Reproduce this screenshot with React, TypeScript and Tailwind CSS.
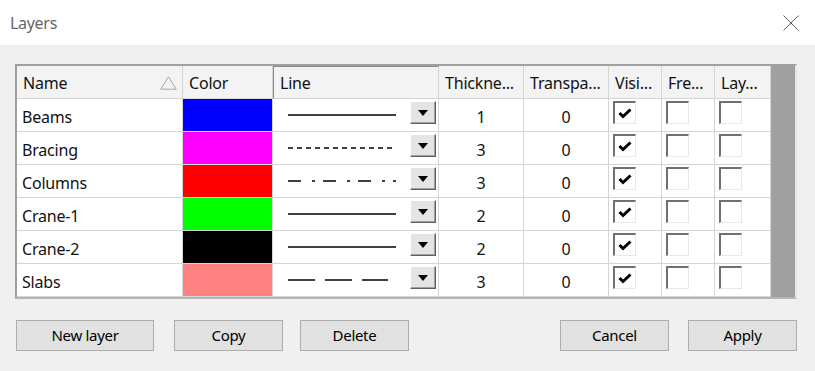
import React from 'react';

type Layer = {
  name: string;
  color: string;
  dash: string;
  thickness: number;
  transparency: number;
  visible: boolean;
};

const LAYERS: Layer[] = [
  { name: 'Beams', color: 'bg-[#0000ff]', dash: '', thickness: 1, transparency: 0, visible: true },
  { name: 'Bracing', color: 'bg-[#ff00ff]', dash: '5 4', thickness: 3, transparency: 0, visible: true },
  { name: 'Columns', color: 'bg-[#ff0000]', dash: '13 11 3 8', thickness: 3, transparency: 0, visible: true },
  { name: 'Crane-1', color: 'bg-[#00ff00]', dash: '', thickness: 2, transparency: 0, visible: true },
  { name: 'Crane-2', color: 'bg-[#000000]', dash: '', thickness: 2, transparency: 0, visible: true },
  { name: 'Slabs', color: 'bg-[#ff8080]', dash: '27 10', thickness: 3, transparency: 0, visible: true },
];

const COLS = 'grid grid-cols-[166px_90px_166px_85px_85px_53px_53px_56px]';

const Checkbox: React.FC<{ checked: boolean }> = ({ checked }) => (
  <div className="ml-[4px] mt-[2px] flex h-[23px] w-[23px] items-center justify-center self-start border-l-2 border-t-2 border-r border-b border-l-[#707070] border-t-[#707070] border-r-[#e8e8e8] border-b-[#e8e8e8] bg-white">
    {checked && (
      <svg width="14" height="12" viewBox="0 0 14 12">
        <path d="M1.5 6 L5 9.5 L12.5 2.5" fill="none" stroke="#000" strokeWidth="3" />
      </svg>
    )}
  </div>
);

const DropButton: React.FC = () => (
  <div className="mr-[2px] mt-[2px] flex h-[23px] w-[26px] items-center justify-center self-start border border-t-white border-l-white border-r-[#606060] border-b-[#606060] bg-[#e4e4e4] shadow-[inset_-1px_-1px_0_#a0a0a0]">
    <svg width="10" height="6" viewBox="0 0 10 6">
      <path d="M0 0 H10 L5 6 Z" fill="#000" />
    </svg>
  </div>
);

const HeadCell: React.FC<{ children?: React.ReactNode; className?: string }> = ({ children, className = '' }) => (
  <div className={`flex h-[33px] items-center border-b border-r border-[#d5d5d5] bg-[#f3f3f3] pl-[6px] pt-[1px] ${className}`}>
    {children}
  </div>
);

const Cell: React.FC<{ children?: React.ReactNode; className?: string }> = ({ children, className = '' }) => (
  <div className={`flex h-[33px] items-center border-b border-r border-[#d5d5d5] ${className}`}>{children}</div>
);

const Btn: React.FC<{ label: string; className?: string }> = ({ label, className = '' }) => (
  <button className={`h-[31px] w-[109px] border border-[#adadad] bg-[#e1e1e1] text-[15px] tracking-[-0.3px] text-black ${className}`}>
    {label}
  </button>
);

export default function App() {
  return (
    <div className="flex h-[371px] w-[815px] flex-col bg-[#f0f0f0] font-['Noto_Sans',sans-serif] text-black">
      <div className="flex h-[45px] items-center justify-between bg-white pl-[10px] pr-[16px]">
        <span className="text-[16px] tracking-[-0.3px] text-[#666666]">Layers</span>
        <svg width="16" height="16" viewBox="0 0 16 16">
          <path d="M0.5 0.5 L15.5 15.5 M15.5 0.5 L0.5 15.5" stroke="#606060" strokeWidth="1" />
        </svg>
      </div>

      <div className="ml-[15px] mt-[19px] flex w-[782px] border-l-2 border-t-2 border-b-2 border-r-2 border-l-[#a0a0a0] border-t-[#a0a0a0] border-b-[#b5b5b5] border-r-[#e6e6e6] bg-white text-[16px] tracking-[-0.2px] text-[#111]">
        <div className="flex flex-col">
          <div className={COLS}>
            <HeadCell className="justify-between pr-[5px]">
              <span>Name</span>
              <svg width="17" height="14" viewBox="0 0 17 14">
                <path d="M8.5 0.8 L16.2 13.2 H0.8 Z" fill="none" stroke="#a8a8a8" strokeWidth="1" />
              </svg>
            </HeadCell>
            <HeadCell>Color</HeadCell>
            <HeadCell className="border-l border-t border-l-[#8a8a8a] border-t-[#8a8a8a] pl-[5px]">Line</HeadCell>
            <HeadCell className="pl-[3px]">Thickne...</HeadCell>
            <HeadCell className="pl-[3px]">Transpa...</HeadCell>
            <HeadCell className="pl-[4px]">Visi...</HeadCell>
            <HeadCell className="pl-[5px]">Fre...</HeadCell>
            <HeadCell className="pl-[5px]">Lay...</HeadCell>
          </div>
          {LAYERS.map((l) => (
            <div key={l.name} className={COLS}>
              <Cell className="pl-[5px] pt-[3px]">{l.name}</Cell>
              <Cell className={l.color} />
              <Cell className="justify-between pl-[15px]">
                <svg width="108" height="2" viewBox="0 0 108 2" className="mt-[-1px]">
                  <line x1="0" y1="1" x2={l.dash === '27 10' ? 100 : 108} y2="1" stroke="#000" strokeWidth="1.5" strokeDasharray={l.dash || undefined} />
                </svg>
                <DropButton />
              </Cell>
              <Cell className="justify-center pt-[3px]">{l.thickness}</Cell>
              <Cell className="justify-center pt-[3px]">{l.transparency}</Cell>
              <Cell>
                <Checkbox checked={l.visible} />
              </Cell>
              <Cell>
                <Checkbox checked={false} />
              </Cell>
              <Cell>
                <Checkbox checked={false} />
              </Cell>
            </div>
          ))}
        </div>
        <div className="flex-1 bg-[#a0a0a0]" />
      </div>

      <div className="mt-[21px] flex pl-[16px]">
        <Btn label="New layer" className="w-[138px]" />
        <Btn label="Copy" className="ml-[20px]" />
        <Btn label="Delete" className="ml-[17px]" />
        <Btn label="Cancel" className="ml-[151px] w-[107px]" />
        <Btn label="Apply" className="ml-[19px]" />
      </div>
    </div>
  );
}
